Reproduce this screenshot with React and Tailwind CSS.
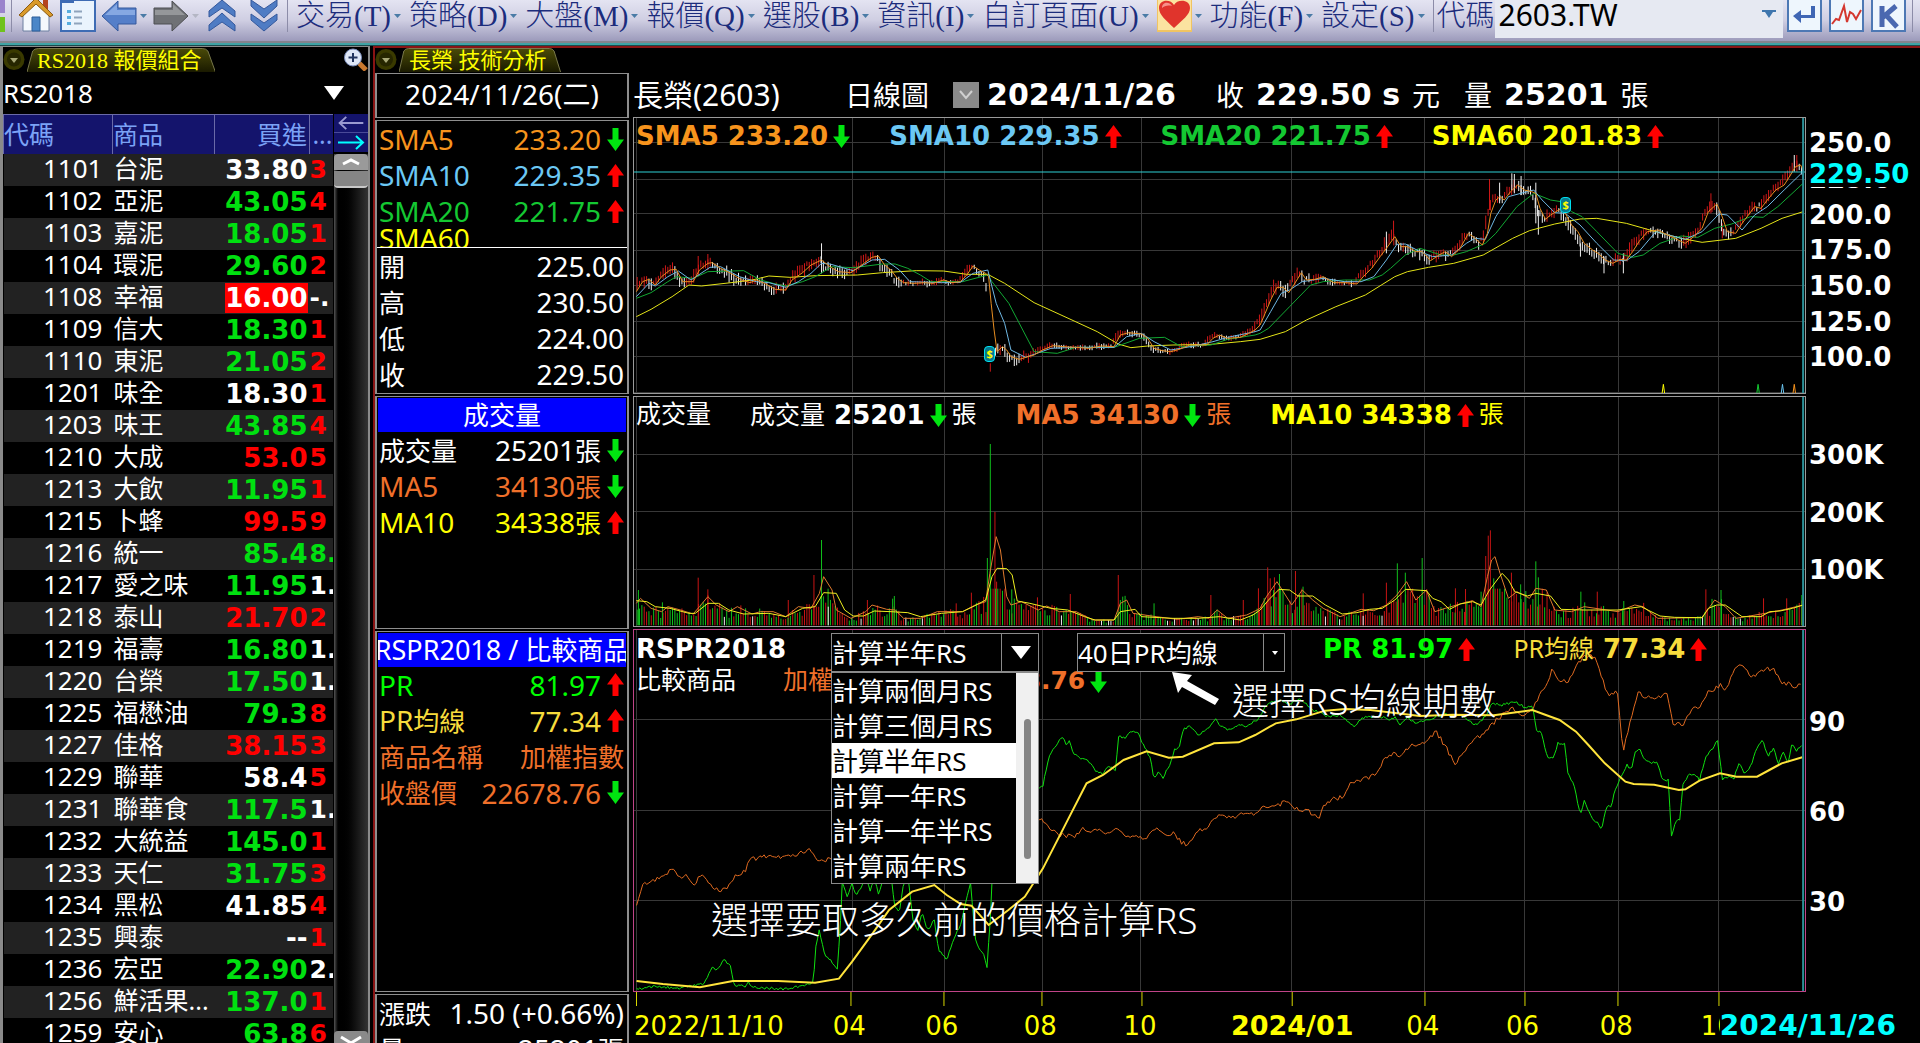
import { useState } from 'react'
import { clsx } from 'clsx'

const UI = "font-['Noto_Sans','Noto_Sans_CJK_TC',sans-serif]"
const BOLD = "font-['DejaVu_Sans','Noto_Sans_CJK_TC',sans-serif] font-bold"
const PLAIN = "font-['DejaVu_Sans','Noto_Sans_CJK_TC',sans-serif]"
const SERIF = "font-['Liberation_Serif','Noto_Sans_CJK_TC',serif]"

const MENUS = ['交易(T)', '策略(D)', '大盤(M)', '報價(Q)', '選股(B)', '資訊(I)', '自訂頁面(U)']
const MENUS_AFTER = ['功能(F)', '設定(S)']

const G = 'text-[#00e010]'
const R = 'text-[#ff0000]'
const W = 'text-white'

const QUOTES = [
  ['1101', '台泥', '33.80', W, '3', R],
  ['1102', '亞泥', '43.05', G, '4', R],
  ['1103', '嘉泥', '18.05', G, '1', R],
  ['1104', '環泥', '29.60', G, '2', R],
  ['1108', '幸福', '16.00', W, '-.', W],
  ['1109', '信大', '18.30', G, '1', R],
  ['1110', '東泥', '21.05', G, '2', R],
  ['1201', '味全', '18.30', W, '1', R],
  ['1203', '味王', '43.85', G, '4', R],
  ['1210', '大成', '53.0', R, '5', R],
  ['1213', '大飲', '11.95', G, '1', R],
  ['1215', '卜蜂', '99.5', R, '9', R],
  ['1216', '統一', '85.4', G, '8.', G],
  ['1217', '愛之味', '11.95', G, '1.', W],
  ['1218', '泰山', '21.70', R, '2', R],
  ['1219', '福壽', '16.80', G, '1.', W],
  ['1220', '台榮', '17.50', G, '1.', W],
  ['1225', '福懋油', '79.3', G, '8', R],
  ['1227', '佳格', '38.15', R, '3', R],
  ['1229', '聯華', '58.4', W, '5', R],
  ['1231', '聯華食', '117.5', G, '1.', W],
  ['1232', '大統益', '145.0', G, '1', R],
  ['1233', '天仁', '31.75', G, '3', R],
  ['1234', '黑松', '41.85', W, '4', R],
  ['1235', '興泰', '--', W, '1', R],
  ['1236', '宏亞', '22.90', G, '2.', W],
  ['1256', '鮮活果...', '137.0', G, '1', R],
  ['1259', '安心', '63.8', G, '6', R],
]

const PERIODS = ['計算兩個月RS', '計算三個月RS', '計算半年RS', '計算一年RS', '計算一年半RS', '計算兩年RS']

// Chart series. Price and volume lines come in two halves, the second one starts at HALF.
const HALF = 1497

function parse(text, dx = 0) {
  return text.trim().split(/\s+/).map((p) => {
    const [x, y] = p.split(',').map(Number)
    return [x + dx, y]
  })
}

function series(a, b) {
  const left = parse(a).filter(([x]) => x < HALF)
  return [...left, ...parse(b, HALF)]
}

function rng(seed) {
  let s = seed
  return () => {
    s = (s * 1664525 + 1013904223) % 4294967296
    return s / 4294967296
  }
}

function valueAt(points, x) {
  for (let i = 1; i < points.length; i++) {
    if (x <= points[i][0]) {
      const [x0, y0] = points[i - 1]
      const [x1, y1] = points[i]
      return y0 + ((y1 - y0) * (x - x0)) / (x1 - x0 || 1)
    }
  }
  return points[points.length - 1][1]
}

const toPoints = (points) => points.map((p) => p.join(',')).join(' ')

function rough(points, step, amp, seed) {
  const rand = rng(seed)
  const out = []
  const end = points[points.length - 1][0]
  for (let x = points[0][0]; x <= end; x += step) {
    out.push([x.toFixed(1), (valueAt(points, x) + (rand() - 0.5) * amp).toFixed(1)])
  }
  return out
}

const SMA5 = series(
  '15,575 30,545 45,538 60,555 75,530 95,510 110,508 125,545 150,545 165,510 185,490 195,488 215,505 240,520 265,540 285,548 300,540 320,550 345,568 370,570 385,540 410,518 430,495 455,480 475,500 495,515 525,518 545,500 575,472 590,468 605,495 620,510 635,535 650,548 675,550 700,548 720,550 745,540 765,548 785,545 800,525 815,498 830,510 845,520 852,530 858,610 865,690 872,755 885,740 895,750 905,770 925,778 945,770 960,765 980,750 1005,737 1030,740 1060,742 1090,745 1120,738 1150,740 1165,705 1185,698 1215,702 1230,715 1245,745 1265,752 1285,755 1305,748 1330,735 1370,735 1385,715 1400,705 1420,715 1450,712 1470,700 1485,690',
  '0,675 12,640 25,600 40,562 55,562 68,578 80,555 98,518 110,540 130,538 150,530 175,548 205,548 230,552 245,530 265,505 285,470 300,445 320,410 335,440 350,440 370,455 385,455 405,482 425,465 440,455 455,470 475,445 495,400 508,412 528,435 540,400 548,340 560,300 570,290 580,300 595,275 612,255 628,270 645,275 655,280 665,325 678,358 690,345 712,328 725,340 740,375 755,395 770,430 790,450 805,462 820,480 838,490 855,478 870,480 885,455 900,425 920,395 945,390 960,400 985,415 1010,430 1030,410 1050,385 1065,335 1085,312 1095,340 1110,395 1130,400 1145,370 1160,345 1175,320 1190,325 1205,300 1225,270 1245,255 1260,225 1272,200 1284,195 1290,210',
)
const SMA10 = series(
  '15,590 45,550 60,558 90,530 115,513 145,540 190,502 215,500 260,530 300,545 330,548 370,562 400,545 430,520 455,490 475,492 530,512 575,480 605,478 640,510 665,545 740,548 785,547 815,520 850,510 870,610 890,670 905,750 940,772 1000,745 1060,742 1150,742 1180,710 1215,700 1245,725 1285,750 1340,738 1385,725 1420,712 1485,695',
  '0,690 25,635 50,580 70,570 100,545 150,535 200,545 240,545 270,530 300,480 325,433 345,432 380,455 410,470 455,465 490,430 510,415 535,418 560,350 590,290 625,278 650,270 670,300 700,338 725,340 760,375 800,430 840,480 870,482 900,455 940,395 980,408 1010,418 1050,395 1090,342 1110,345 1145,390 1175,345 1205,320 1245,270 1290,215',
)
const SMA20 = series(
  '15,595 50,578 90,545 110,530 150,535 185,515 270,512 310,540 340,550 370,558 410,545 440,530 480,500 530,503 600,492 630,492 660,505 690,525 715,545 790,545 850,525 860,545 900,610 960,755 1015,760 1060,742 1150,742 1210,715 1270,712 1310,740 1380,735 1420,718 1485,705',
  '0,700 20,685 70,620 120,555 150,545 200,540 260,540 290,525 310,505 345,465 380,445 430,465 460,465 490,455 535,430 560,400 610,320 650,280 690,300 715,305 740,335 765,350 800,395 850,460 885,472 910,465 950,430 1000,408 1040,412 1080,385 1120,372 1165,350 1195,352 1230,320 1290,250',
)
const SMA60 = series(
  '15,650 50,628 100,590 140,555 170,558 240,548 290,540 330,528 380,532 440,527 540,525 600,518 680,512 745,513 800,523 850,523 890,550 960,608 1050,660 1110,695 1160,732 1190,743 1230,738 1290,735 1380,733 1450,725',
  '0,718 60,695 110,660 180,620 250,585 320,530 350,515 400,502 460,490 530,465 600,415 640,392 700,372 760,357 800,355 870,370 940,395 1000,415 1050,427 1130,415 1190,385 1240,355 1290,335',
)
const VOL5 = series(
  '15,640 25,625 50,655 75,665 90,650 120,660 150,672 165,650 185,620 205,645 235,665 255,650 290,672 310,665 340,665 370,680 400,650 430,655 450,610 460,560 480,600 490,660 525,685 560,665 575,645 610,658 630,660 650,685 690,685 730,665 790,665 820,645 845,635 855,550 870,440 880,480 895,620 905,645 930,635 970,660 990,648 1020,665 1060,665 1100,690 1150,690 1165,640 1180,630 1195,670 1250,680 1300,688 1350,680 1375,685 1395,660 1420,685 1465,675 1490,660',
  '0,655 15,620 40,575 55,605 75,645 100,600 125,630 150,655 190,680 240,658 270,662 300,645 325,615 348,575 370,630 395,600 415,665 440,655 480,640 505,632 525,650 540,560 550,510 558,500 570,550 590,625 610,605 640,625 655,595 680,600 700,660 740,665 770,650 850,665 890,645 910,650 945,685 1050,683 1080,630 1105,650 1130,685 1200,670 1240,660 1290,645',
)
const VOL10 = series(
  '15,632 40,635 60,650 95,655 140,670 155,670 185,640 210,640 235,660 270,672 330,670 370,680 410,655 440,650 460,608 490,610 510,660 530,678 555,678 580,663 620,665 660,668 690,680 740,670 790,665 815,650 845,630 860,560 872,535 895,536 908,555 920,633 950,640 1000,655 1040,660 1080,680 1105,690 1150,690 1165,665 1200,658 1215,680 1290,685 1350,685 1400,680 1450,690 1480,675',
  '0,660 20,630 45,598 70,600 90,618 125,618 155,645 195,672 230,668 260,658 290,655 320,630 345,598 395,602 410,625 430,635 450,658 475,642 505,635 525,645 545,600 575,550 590,570 605,605 635,618 655,610 690,618 715,658 770,660 850,660 905,650 950,678 985,682 1050,683 1065,655 1085,645 1105,645 1145,680 1190,680 1210,665 1235,663 1265,655 1290,645',
)

// x, top, colour of the sessions that stand out
const SPIKES = [
  [20, 600, 'g'], [77, 637, 'g'], [162, 563, 'r'], [185, 598, 'r'], [376, 630, 'r'], [437, 555, 'r'],
  [455, 450, 'g'], [471, 650, 'w'], [564, 630, 'r'], [624, 626, 'g'], [628, 618, 'g'], [775, 640, 'r'],
  [811, 608, 'r'], [849, 504, 'g'], [856, 162, 'g'], [867, 366, 'r'], [871, 575, 'r'], [907, 598, 'g'],
  [968, 622, 'r'], [1046, 612, 'r'], [1160, 555, 'r'], [1165, 630, 'g'], [1245, 640, 'g'],
  [1380, 615, 'r'], [1457, 630, 'r'], [1493, 595, 'r'], [1515, 532, 'r'], [1521, 565, 'r'],
  [1531, 562, 'r'], [1543, 552, 'g'], [1581, 543, 'r'], [1599, 590, 'g'], [1742, 610, 'r'],
  [1797, 578, 'r'], [1823, 520, 'g'], [1842, 548, 'g'], [1882, 504, 'g'], [1961, 595, 'r'],
  [1985, 597, 'r'], [2022, 605, 'g'], [2033, 498, 'r'], [2039, 437, 'r'], [2044, 421, 'r'],
  [2052, 565, 'g'], [2094, 548, 'r'], [2116, 583, 'g'], [2152, 514, 'g'], [2158, 562, 'g'],
  [2259, 605, 'g'], [2298, 605, 'r'], [2361, 633, 'g'], [2556, 598, 'r'], [2592, 600, 'g'],
  [2693, 625, 'r'], [2748, 625, 'r'], [2784, 615, 'g'],
]

// x, high, low, colour
const LONG_CANDLES = [
  [455, 430, 520, 'w'], [162, 468, 520, 'r'], [185, 462, 510, 'r'], [2042, 237, 330, 'r'],
  [2066, 248, 310, 'w'], [2095, 220, 270, 'w'], [2101, 222, 280, 'w'], [2117, 228, 285, 'w'],
  [2152, 248, 370, 'w'], [2158, 330, 404, 'w'], [1814, 362, 420, 'r'], [1797, 395, 460, 'w'],
  [2258, 430, 470, 'w'], [2314, 470, 520, 'w'], [2360, 460, 520, 'w'], [2568, 280, 340, 'r'],
  [2595, 370, 415, 'r'], [2766, 165, 215, 'w'], [2772, 165, 200, 'r'], [2787, 180, 240, 'w'],
  [856, 790, 815, 'r'],
]

const BAR = 5.6

function buildCandles() {
  const rand = rng(7)
  const d = { r: '', w: '' }
  for (let x = 17; x < 2786; x += BAR) {
    if (x > 850 && x < 864) continue
    const here = valueAt(SMA5, Math.min(x + 8, 2787))
    const prev = valueAt(SMA5, x - 4)
    const slope = Math.abs(here - prev)
    const calm = x > 640 && x < 790 ? 12 : x > 960 && x < 1480 ? 10 : x > 1640 && x < 1730 ? 14 : 26
    const mid = here + (rand() - 0.5) * calm * 0.6
    const len = 8 + rand() * calm + Math.min(slope, 20) * 0.4
    const up = here < prev + (rand() - 0.5) * 10
    d[up ? 'r' : 'w'] += `M${x.toFixed(1)} ${(mid - len / 2).toFixed(1)}v${len.toFixed(1)}`
  }
  LONG_CANDLES.forEach(([x, high, low, c]) => {
    d[c] += `M${x} ${high}V${low}`
  })
  return d
}

function buildVolume() {
  const rand = rng(21)
  const d = { r: '', g: '', w: '' }
  for (let x = 17; x < 2786; x += BAR) {
    const base = 706 - valueAt(VOL5, x)
    const height = Math.min(base * (0.5 + rand() * 0.75), 110)
    const k = rand()
    const c = height < 30 && k > 0.8 ? 'w' : k < 0.45 ? 'g' : 'r'
    d[c] += `M${x.toFixed(1)} 706v${(-height).toFixed(1)}`
  }
  SPIKES.forEach(([x, top, c]) => {
    d[c] += `M${x} 706V${top}`
  })
  return d
}

const CANDLES = buildCandles()
const VOLUME = buildVolume()

const PR = parse(
  '8,1107 30,1100 60,1104 90,1090 100,1045 107,1050 114,1020 122,1038 127,1098 140,1098 143,1085 148,1102 190,1107 215,1095 223,1088 226,980 230,930 237,1010 242,1015 252,1050 256,900 258,790 264,830 270,790 275,830 281,800 286,770 292,810 297,780 302,820 306,790 312,770 318,780 322,860 327,880 332,800 338,770 344,900 350,930 355,880 362,930 370,900 375,990 385,1018 392,970 402,910 408,850 414,790 420,960 425,990 430,1005 434,1040 438,900 440,790 445,700 470,600 490,520 502,495 510,405 518,380 525,350 531,375 534,362 540,405 550,415 558,425 565,450 574,460 580,445 585,440 590,450 594,350 602,352 610,335 617,335 624,375 632,410 637,475 642,455 648,472 655,440 662,390 668,375 673,325 683,320 690,345 702,325 712,300 718,318 728,330 740,315 750,318 765,295 775,250 790,240 800,255 815,235 830,270 850,290 862,285 870,300 880,320 890,295 900,290 912,290 925,300 930,290 937,315 945,290 955,310 965,300 975,295 990,280 1000,290 1010,285 1028,315 1040,290 1048,250 1060,255 1075,245 1088,262 1097,255 1102,330 1108,340 1115,415 1122,415 1128,370 1136,370 1140,460 1148,500 1155,585 1160,545 1168,590 1175,605 1181,632 1187,555 1193,560 1197,510 1205,470 1212,435 1217,450 1222,395 1228,385 1233,420 1240,430 1248,425 1255,480 1262,480 1266,645 1272,600 1277,600 1279,500 1286,465 1295,465 1300,480 1308,410 1315,390 1322,360 1328,480 1335,470 1342,475 1348,430 1355,460 1362,440 1370,385 1377,360 1383,410 1390,385 1396,430 1402,395 1408,430 1412,375 1418,390 1425,375',
)
const PR_AVG = parse(
  '8,1083 40,1092 85,1102 125,1083 180,1083 225,1088 254,1076 270,1025 295,940 315,870 343,815 370,795 385,825 402,852 415,857 436,915 460,870 480,830 502,745 530,610 555,490 575,465 600,420 628,394 655,413 672,410 710,370 740,367 760,345 785,310 810,298 845,272 870,267 900,270 960,288 1000,284 1050,286 1097,270 1110,282 1130,300 1150,335 1165,375 1185,430 1210,485 1220,492 1245,494 1275,510 1283,508 1300,482 1325,460 1345,470 1370,470 1385,450 1400,430 1425,412',
)
const INDEX = parse(
  '8,860 15,790 28,785 40,765 52,748 62,778 68,765 78,790 87,765 97,795 108,815 122,795 127,770 140,755 145,715 155,715 165,708 180,712 195,708 218,690 228,715 235,730 243,715 300,680 380,640 460,600 500,595 510,625 522,645 540,650 550,625 560,635 570,628 580,640 592,620 602,655 614,650 627,660 640,620 650,640 660,640 670,665 678,678 690,630 702,625 712,590 720,585 732,595 742,578 755,585 770,562 785,560 797,542 805,565 815,568 825,572 837,598 845,550 858,535 868,530 877,485 890,480 905,465 915,425 928,400 938,405 950,375 965,370 980,335 990,375 1003,430 1013,400 1020,375 1030,355 1045,320 1060,285 1073,262 1086,290 1097,265 1110,210 1121,150 1128,185 1140,185 1150,140 1158,110 1172,110 1180,165 1190,230 1200,210 1207,400 1215,310 1225,215 1235,230 1245,230 1252,232 1260,215 1268,310 1280,315 1290,270 1300,265 1310,220 1325,195 1332,208 1342,155 1350,135 1360,160 1367,175 1372,150 1390,145 1400,190 1410,190 1417,205 1425,185',
)

const GRID_X = [15, 528, 748, 980, 1215, 1571, 1887, 2125, 2349, 2587]
const GRID_X_PR = [8, 270, 382, 502, 621, 804, 966, 1087, 1202, 1323]

// share of the chart width
const DATES = [
  { at: 18.6, label: '04' },
  { at: 26.5, label: '06' },
  { at: 34.9, label: '08' },
  { at: 43.4, label: '10' },
  { at: 56.2, label: '2024/01', bold: true },
  { at: 67.5, label: '04' },
  { at: 76.0, label: '06' },
  { at: 84.0, label: '08' },
  { at: 92.6, label: '10' },
]

function Arrow({ up }) {
  return (
    <svg viewBox="0 0 17 23" className="h-[23px] w-[17px] shrink-0" fill={up ? '#ff0000' : '#00e510'}>
      {up ? (
        <path d="M8.500 0L17 11.500H11.500V23H5.500V11.500H0Z" />
      ) : (
        <path d="M8.500 23L17 11.500H11.500V0H5.500V11.500H0Z" />
      )}
    </svg>
  )
}

function Line({ points, color, width = 1 }) {
  return (
    <polyline
      points={toPoints(points)}
      fill="none"
      stroke={color}
      strokeWidth={width}
      vectorEffect="non-scaling-stroke"
    />
  )
}

function Bars({ d, color }) {
  return <path d={d} stroke={color} strokeWidth="1" vectorEffect="non-scaling-stroke" fill="none" />
}

function Grid({ xs, ys, right, bottom }) {
  const d = xs.map((x) => `M${x} 0V${bottom}`).join('') + ys.map((y) => `M0 ${y}H${right}`).join('')
  return (
    <path
      d={d}
      stroke="#383838"
      strokeWidth="1"
      vectorEffect="non-scaling-stroke"
      shapeRendering="crispEdges"
      fill="none"
    />
  )
}

function Caret({ pale }) {
  return (
    <svg viewBox="0 0 7 4" className="h-1 w-[7px] shrink-0" fill={pale ? '#b4b6c4' : '#4a7ba6'}>
      <path d="M0 0H7L3.500 4Z" />
    </svg>
  )
}

function MenuButton({ children }) {
  return (
    <button type="button" className="flex items-center gap-[3px] whitespace-nowrap pr-2">
      <span>{children}</span>
      <Caret />
    </button>
  )
}

function ToolbarIcons() {
  return (
    <div className="flex h-8 shrink-0 items-start">
      <svg viewBox="0 0 12 32" className="h-8 w-3">
        <path d="M0 0H5V13H0Z" fill="#9a83cc" />
        <path d="M0 17H5V32H0Z" fill="#6fc21c" />
        <path d="M11.500 0V32" stroke="#8c8ca8" />
      </svg>
      <button type="button" aria-label="首頁" className="ml-[6px]">
        <svg viewBox="0 0 36 32" className="h-8 w-9">
          <path d="M25 0H30V9H25Z" fill="#b5431f" />
          <path d="M5 14L18 2L31 14V31H5Z" fill="#f4f8fd" stroke="#6d7fa0" />
          <path d="M1 15L18 -2L35 15L32 17L18 4L4 17Z" fill="#d99a2b" stroke="#8a5a12" />
          <path d="M14 17H22V31H14Z" fill="#4a86c8" stroke="#2b5c98" />
        </svg>
      </button>
      <button type="button" aria-label="清單" className="ml-[6px]">
        <svg viewBox="0 0 36 32" className="h-8 w-9">
          <path d="M1 0H35V31H1Z" fill="#eaf4fd" stroke="#3e6cb4" strokeWidth="2" />
          <path d="M1 0H14V3H1Z" fill="#3e6cb4" />
          <path d="M7 10H11V13H7ZM7 16H11V19H7ZM7 22H11V25H7Z" fill="#59aede" />
          <path d="M14 11.500H22M14 17.500H22M14 23.500H22" stroke="#8fa4bc" strokeWidth="2" />
        </svg>
      </button>
      <button type="button" aria-label="上一頁" className="ml-[5px] flex items-center gap-[3px]">
        <svg viewBox="0 0 36 32" className="h-8 w-9">
          <path d="M1 16L17 1V8H35V24H17V31Z" fill="#557fc9" stroke="#34589c" />
          <path d="M4 15L16 4V10H34V15Z" fill="#86a8e2" />
        </svg>
        <Caret />
      </button>
      <button type="button" aria-label="下一頁" className="ml-[6px] flex items-center gap-[3px]">
        <svg viewBox="0 0 36 32" className="h-8 w-9">
          <path d="M35 16L19 1V8H1V24H19V31Z" fill="#6f7175" stroke="#4d4f52" />
          <path d="M32 15L20 4V10H2V15Z" fill="#95979a" />
        </svg>
        <Caret pale />
      </button>
      <button type="button" aria-label="向上" className="ml-[9px]">
        <svg viewBox="0 0 28 32" className="h-8 w-7" fill="#4f7cc4" stroke="#34589c">
          <path d="M14 0L27 11V17L14 8L1 17V11Z" />
          <path d="M14 13L27 25V31L14 22L1 31V25Z" />
        </svg>
      </button>
      <button type="button" aria-label="向下" className="ml-[14px]">
        <svg viewBox="0 0 28 32" className="h-8 w-7" fill="#4f7cc4" stroke="#34589c">
          <path d="M14 18L27 6V0L14 9L1 0V6Z" />
          <path d="M14 31L27 20V14L14 23L1 14V20Z" />
        </svg>
      </button>
      <div className="ml-[9px] h-8 w-px bg-[#8c8ca8]" />
    </div>
  )
}

function Toolbar() {
  const [code, setCode] = useState('2603.TW')

  return (
    <header className="shrink-0">
      <div className="flex h-[41px] items-start overflow-hidden bg-linear-to-b from-[#e4e4f2] via-[#cfcee2] to-[#9c9abb]">
        <ToolbarIcons />
        <nav
          className={clsx(SERIF, 'flex h-8 shrink-0 items-center pl-2 text-[29px] leading-8 font-light text-[#1c2c7c]')}
        >
          {MENUS.map((m) => (
            <MenuButton key={m}>{m}</MenuButton>
          ))}
          <button type="button" aria-label="我的最愛" className="mr-2 flex items-center gap-[3px]">
            <svg viewBox="0 0 35 32" className="h-8 w-[35px]">
              <path d="M0 0H35V32H0Z" fill="#f0c462" />
              <path d="M1 0H34V30H1Z" fill="#fbe3a0" />
              <path d="M17 28C9 20 2 15 2 8C2 -1 14 -1 17 5C20 -1 33 -1 33 8C33 15 25 20 17 28Z" fill="#e0342c" />
              <path d="M5 8C5 2 12 1 15 6C11 5 7 6 5 8Z" fill="#f6928a" />
            </svg>
            <Caret />
          </button>
          {MENUS_AFTER.map((m) => (
            <MenuButton key={m}>{m}</MenuButton>
          ))}
          <label htmlFor="code" className="border-l border-[#8c8ca8] pl-[3px]">
            代碼
          </label>
        </nav>
        <div className="flex h-[38px] min-w-0 flex-1 items-start bg-[#e6e9f2]">
          <input
            id="code"
            value={code}
            onChange={(e) => setCode(e.target.value)}
            className={clsx(UI, 'h-8 min-w-0 flex-1 bg-transparent pb-1 pl-1 text-[30px] text-black outline-none')}
          />
          <button type="button" aria-label="代碼清單" className="mt-[10px] mr-[7px]">
            <svg viewBox="0 0 14 8" className="h-2 w-[14px]" fill="#3f76ae">
              <path d="M0 0H14V2H11L7 8L3 2H0Z" />
            </svg>
          </button>
        </div>
        <div className="flex shrink-0 gap-[7px] pl-1">
          <button type="button" aria-label="確認">
            <svg viewBox="0 0 35 32" className="h-8 w-[35px]">
              <path d="M1 -2H34V31H1Z" fill="#eef6fd" stroke="#4d78b4" strokeWidth="2" />
              <path d="M28 6V18H14V23L6 16L14 10V15H24V6Z" fill="#3f66b4" />
            </svg>
          </button>
          <button type="button" aria-label="走勢圖">
            <svg viewBox="0 0 35 32" className="h-8 w-[35px]">
              <path d="M1 -2H34V31H1Z" fill="#eef6fd" stroke="#4d78b4" strokeWidth="2" />
              <path d="M3 24L7 19L10 20L15 6L18 22L21 12L24 14L27 19L32 10" fill="none" stroke="#d4372f" strokeWidth="2" />
            </svg>
          </button>
          <button type="button" aria-label="K線圖">
            <svg viewBox="0 0 35 32" className="h-8 w-[35px]">
              <path d="M1 -2H34V31H1Z" fill="#eef6fd" stroke="#4d78b4" strokeWidth="2" />
              <path d="M11 6V27M25 6L11 18M15 15L26 27" fill="none" stroke="#4a68b0" strokeWidth="5" />
            </svg>
          </button>
        </div>
        <div className="ml-[6px] h-8 w-[8px] border-l border-[#8c8ca8]" />
      </div>
      <div className="h-[2px] bg-[#84848e]" />
      <div className="h-[2px] bg-[#3fa3a5]" />
      <div className="h-px bg-[#1c4a4c]" />
    </header>
  )
}

function Tab({ children }) {
  return (
    <div className="flex items-start gap-[2px]">
      <button type="button" aria-label="選單">
        <svg viewBox="0 0 22 23" className="h-[23px] w-[22px]">
          <circle cx="11" cy="11.500" r="10.500" fill="#3a3a00" />
          <circle cx="11" cy="11.500" r="7" fill="#262600" />
          <path d="M7 10H15L11 15Z" fill="#a8a878" />
        </svg>
      </button>
      <div className={clsx(SERIF, 'relative h-6 pr-[14px] pl-[10px] text-[22px] leading-[26px] text-[#ffff00]')}>
        <svg viewBox="0 0 100 24" preserveAspectRatio="none" className="absolute inset-0 h-full w-full">
          <defs>
            <linearGradient id="tab" x1="0" y1="0" x2="0" y2="1">
              <stop offset="0" stopColor="#4a4a08" />
              <stop offset="1" stopColor="#1a1a00" />
            </linearGradient>
          </defs>
          <path
            d="M0 24L3 3Q4 0.500 6 0.500H93Q95 0.500 96 3L100 24"
            fill="url(#tab)"
            stroke="#77774a"
            vectorEffect="non-scaling-stroke"
          />
        </svg>
        <span className="relative whitespace-nowrap">{children}</span>
      </div>
    </div>
  )
}

function QuotePanel() {
  return (
    <section className="flex w-[370px] shrink-0 flex-col overflow-hidden border-t border-r-2 border-l-[3px] border-[#8a8a8a] bg-black">
      <div className="flex h-[25px] shrink-0 items-start justify-between pt-px">
        <Tab>RS2018 報價組合</Tab>
        <button type="button" aria-label="放大">
          <svg viewBox="0 0 25 23" className="h-[23px] w-[25px]">
            <path d="M15 14L23 22" stroke="#c9782e" strokeWidth="5" />
            <circle cx="10" cy="9.500" r="8.500" fill="#dfe7f7" stroke="#7c8fbe" />
            <path d="M10 5V14M5.500 9.500H14.500" stroke="#22345e" strokeWidth="2" />
          </svg>
        </button>
      </div>
      <div className="relative flex h-[42px] shrink-0 items-center">
        <select
          aria-label="報價組合"
          className={clsx(UI, 'h-full w-full appearance-none bg-black text-[26px] text-white outline-none')}
        >
          <option>RS2018</option>
        </select>
        <svg viewBox="0 0 20 14" className="pointer-events-none absolute right-6 h-[14px] w-5" fill="#fff">
          <path d="M0 0H20L10 14Z" />
        </svg>
      </div>
      <div className="flex min-h-0 flex-1 justify-between">
        <div className="min-w-0 overflow-hidden">
          <table className={clsx(UI, 'w-[329px] table-fixed border-collapse text-white')}>
            <colgroup>
              <col className="w-[109px]" />
              <col className="w-[102px]" />
              <col className="w-[95px]" />
              <col className="w-[23px]" />
            </colgroup>
            <thead>
              <tr className="h-[39px] bg-[#14146c] text-[25px] leading-8 text-[#7ba2f6]">
                <th className="border-t border-l border-[#6a6aa8] p-0 text-left font-normal">代碼</th>
                <th className="border-t border-l border-[#6a6aa8] p-0 text-left font-normal">商品</th>
                <th className="border-t border-l border-[#6a6aa8] p-0 pr-[2px] text-right font-normal">買進</th>
                <th className="border-t border-l border-[#6a6aa8] p-0 text-right font-normal">...</th>
              </tr>
            </thead>
            <tbody>
              {QUOTES.map(([id, name, bid, bidColor, ask, askColor]) => (
                <tr key={id} className="h-8 leading-[30px] whitespace-nowrap odd:bg-[#222222]">
                  <td className="p-0 pr-[10px] text-right align-top text-[26px] leading-7">{id}</td>
                  <td className="p-0 pl-px align-top text-[25px] leading-7">{name}</td>
                  <td className={clsx(BOLD, 'p-0 pr-[2px] text-right text-[26px]', bidColor)}>
                    <span className={clsx('inline-block', id === '1108' && 'bg-[#ff0000]')}>{bid}</span>
                  </td>
                  <td className={clsx(BOLD, 'overflow-hidden p-0 text-[25px]', askColor)}>{ask}</td>
                </tr>
              ))}
            </tbody>
          </table>
        </div>
        <div className="flex w-[34px] shrink-0 flex-col">
          <div className="flex h-[38px] shrink-0 flex-col bg-[#14146c]">
            <button type="button" aria-label="往左" className="h-[19px] border-b border-[#4a4a98]">
              <svg viewBox="0 0 34 19" className="h-[18px] w-full" fill="none" stroke="#9a9ad0" strokeWidth="2">
                <path d="M30 9.500H5M12 3L5 9.500L12 16" />
              </svg>
            </button>
            <button type="button" aria-label="往右" className="h-[19px]">
              <svg viewBox="0 0 34 19" className="h-[19px] w-full" fill="none" stroke="#00ffff" strokeWidth="2">
                <path d="M4 9.500H29M22 3L29 9.500L22 16" />
              </svg>
            </button>
          </div>
          <div className="mt-[2px] flex min-h-0 flex-1 flex-col justify-between bg-linear-to-r from-[#555] via-black via-15% to-[#333]">
            <div>
              <button type="button" aria-label="向上捲動" className="block h-4 w-full rounded-t bg-[#9a9a9a]">
                <svg viewBox="0 0 34 16" className="h-4 w-full" fill="none" stroke="#fff" strokeWidth="3">
                  <path d="M9 10L17 6L25 10" />
                </svg>
              </button>
              <div className="mt-px h-[17px] rounded-b border-b-2 border-[#c8c8c8] bg-[#858585]" />
            </div>
            <button type="button" aria-label="向下捲動" className="block h-3 w-full rounded-t bg-[#8a8a8a]">
              <svg viewBox="0 0 34 12" className="h-3 w-full" fill="none" stroke="#fff" strokeWidth="3">
                <path d="M7 6L17 12L27 6" />
              </svg>
            </button>
          </div>
        </div>
      </div>
    </section>
  )
}

function Cjk({ children }) {
  return <span className="text-[26px]">{children}</span>
}

function InfoRow({ label, value, dir, color }) {
  return (
    <div className={clsx('flex h-9 shrink-0 items-center pr-[3px] pl-[2px] whitespace-nowrap', color)}>
      <span className="flex-1">{label}</span>
      <span>{value}</span>
      {dir && (
        <span className="ml-[6px]">
          <Arrow up={dir === 'up'} />
        </span>
      )}
    </div>
  )
}

function InfoTitle({ children }) {
  return (
    <div className="mx-px mt-px flex h-[34px] shrink-0 items-center justify-center overflow-hidden bg-[#0000ff] text-[27px] whitespace-nowrap">
      <span className="shrink-0">{children}</span>
    </div>
  )
}

const BOX = 'flex flex-col min-h-0 overflow-hidden border-x-2 border-y border-[#8e8e8e]'

function InfoColumn() {
  return (
    <aside className={clsx(UI, 'flex w-[254px] shrink-0 flex-col gap-[2px] text-[28px] leading-9 text-white')}>
      <div>
        <div className="h-[25px]">
          <Tab>長榮 技術分析</Tab>
        </div>
        <div className="flex h-[45px] items-center justify-center border-x-2 border-y border-[#8e8e8e] pb-1">
          2024/11/26(二)
        </div>
      </div>
      <div className={clsx(BOX, 'flex-[274]')}>
        <InfoRow label="SMA5" value="233.20" dir="down" color="text-[#f7941d]" />
        <InfoRow label="SMA10" value="229.35" dir="up" color="text-[#6cc8f4]" />
        <InfoRow label="SMA20" value="221.75" dir="up" color="text-[#14c832]" />
        <div className="h-[19px] shrink-0 overflow-hidden border-b border-white px-[2px] leading-[18px] text-[#ffff00]">
          SMA60
        </div>
        <InfoRow label={<Cjk>開</Cjk>} value="225.00" />
        <InfoRow label={<Cjk>高</Cjk>} value="230.50" />
        <InfoRow label={<Cjk>低</Cjk>} value="224.00" />
        <InfoRow label={<Cjk>收</Cjk>} value="229.50" />
      </div>
      <div className={clsx(BOX, 'flex-[232]')}>
        <InfoTitle>
          <Cjk>成交量</Cjk>
        </InfoTitle>
        <InfoRow label={<Cjk>成交量</Cjk>} value={<>25201<Cjk>張</Cjk></>} dir="down" />
        <InfoRow label="MA5" value={<>34130<Cjk>張</Cjk></>} dir="down" color="text-[#f0702a]" />
        <InfoRow label="MA10" value={<>34338<Cjk>張</Cjk></>} dir="up" color="text-[#ffff00]" />
      </div>
      <div className={clsx(BOX, 'flex-[362]')}>
        <InfoTitle>
          RSPR2018 / <Cjk>比較商品</Cjk>
        </InfoTitle>
        <InfoRow label="PR" value="81.97" dir="up" color="text-[#00ff00]" />
        <InfoRow label={<>PR<Cjk>均線</Cjk></>} value="77.34" dir="up" color="text-[#f7dc3c]" />
        <InfoRow label={<Cjk>商品名稱</Cjk>} value={<Cjk>加權指數</Cjk>} color="text-[#f0702a]" />
        <InfoRow label={<Cjk>收盤價</Cjk>} value="22678.76" dir="down" color="text-[#f0702a]" />
      </div>
      <div className="h-[49px] shrink-0 overflow-hidden border-x-2 border-t border-[#8e8e8e]">
        <InfoRow label={<Cjk>漲跌</Cjk>} value="1.50 (+0.66%)" />
        <InfoRow label={<Cjk>量</Cjk>} value={<>25201<Cjk>張</Cjk></>} />
      </div>
    </aside>
  )
}

function AxisLabel({ top, className, children }) {
  return (
    <span
      className={clsx(BOLD, 'absolute left-0 -translate-y-1/2 bg-black pl-[3px] text-[26px] leading-[26px]', className)}
      style={{ top: `${top}%` }}
    >
      {children}
    </span>
  )
}

function Legend({ children, dir, unit, color }) {
  return (
    <span className={clsx('flex items-center gap-[5px] whitespace-nowrap', color)}>
      {children}
      <Arrow up={dir === 'up'} />
      {unit && <span className="text-[25px] font-normal">{unit}</span>}
    </span>
  )
}

function Dividend({ left, top }) {
  return (
    <span
      className="absolute flex h-4 w-[11px] items-center justify-center rounded-sm border border-[#00e0f0] bg-[#08788c] text-[11px] leading-none font-bold text-[#ffff00]"
      style={{ left: `${left}%`, top: `${top}%` }}
    >
      $
    </span>
  )
}

function ChartHeader() {
  return (
    <div className={clsx(UI, 'flex h-[69px] shrink-0 items-center pt-6 text-[28px] leading-9 whitespace-nowrap text-white')}>
      <span className="w-[212px] text-[30px]">長榮(2603)</span>
      <span>日線圖</span>
      <button type="button" aria-label="週期" className="mr-2 ml-6 flex h-[26px] w-[26px] items-center justify-center bg-[#8a8a8a]">
        <svg viewBox="0 0 16 12" className="h-3 w-4" fill="none" stroke="#d0d0d0" strokeWidth="2">
          <path d="M2 2L8 9L14 2" />
        </svg>
      </button>
      <span className={clsx(BOLD, 'text-[30px]')}>2024/11/26</span>
      <span className="ml-10">收</span>
      <span className={clsx(BOLD, 'ml-3 text-[30px]')}>229.50 s</span>
      <span className="ml-3">元</span>
      <span className="ml-6">量</span>
      <span className={clsx(BOLD, 'ml-3 text-[30px]')}>25201</span>
      <span className="ml-3">張</span>
    </div>
  )
}

function PriceChart() {
  return (
    <div className="flex min-h-0 flex-[277]">
      <div className="relative flex-1 border border-[#9a9a9a]">
        <svg viewBox="9.5 54 2782 825" preserveAspectRatio="none" className="absolute inset-0 h-full w-full">
          <Grid xs={GRID_X} ys={[127, 237, 341, 450, 555, 663, 769, 876]} right={2792} bottom={880} />
          <Bars d={CANDLES.r} color="#d01818" />
          <Bars d={CANDLES.w} color="#f0f0f0" />
          <Line points={SMA60} color="#e4e418" />
          <Line points={SMA20} color="#12a834" />
          <Line points={SMA10} color="#6fb8e4" />
          <Line points={SMA5} color="#e88e20" />
          <Line points={[[0, 216], [2792, 216]]} color="#2fd0d4" />
          <Line points={[[2452, 880], [2455, 853], [2458, 880]]} color="#ffff00" />
          <Line points={[[2677, 880], [2680, 853], [2683, 880]]} color="#14c832" />
          <Line points={[[2735, 880], [2738, 853], [2741, 880]]} color="#6cc8f4" />
          <Line points={[[2763, 880], [2766, 853], [2769, 880]]} color="#f7941d" />
          <path d="M2787 54V880" stroke="#2a8f96" strokeWidth="2" vectorEffect="non-scaling-stroke" />
        </svg>
        <Dividend left={29.9} top={82.8} />
        <Dividend left={79.1} top={28.7} />
        <div className={clsx(BOLD, 'relative flex h-9 items-center gap-[39px] pl-[2px] text-[26px]')}>
          <Legend dir="down" color="text-[#f7941d]">SMA5 233.20</Legend>
          <Legend dir="up" color="text-[#6cc8f4]">SMA10 229.35</Legend>
          <Legend dir="up" color="text-[#14c832]">SMA20 221.75</Legend>
          <Legend dir="up" color="text-[#ffff00]">SMA60 201.83</Legend>
        </div>
      </div>
      <div className="relative w-[114px] text-white">
        {[250, 225, 200, 175, 150, 125, 100].map((v) => (
          <AxisLabel key={v} top={86.800 - (v - 100) * 0.515}>
            {v.toFixed(1)}
          </AxisLabel>
        ))}
        <AxisLabel top={20.500} className="text-[#00ffff]">
          229.50
        </AxisLabel>
      </div>
    </div>
  )
}

function VolumeChart() {
  return (
    <div className="flex min-h-0 flex-[231]">
      <div className="relative flex-1 border border-[#9a9a9a]">
        <svg viewBox="9.5 21 2782 687" preserveAspectRatio="none" className="absolute inset-0 h-full w-full">
          <Grid xs={GRID_X} ys={[192, 364, 537]} right={2792} bottom={708} />
          <Bars d={VOLUME.r} color="#c81414" />
          <Bars d={VOLUME.g} color="#10c01c" />
          <Bars d={VOLUME.w} color="#f0f0f0" />
          <Line points={VOL5} color="#e07a2e" />
          <Line points={VOL10} color="#f0f020" />
          <path d="M2787 21V708" stroke="#2a8f96" strokeWidth="2" vectorEffect="non-scaling-stroke" />
        </svg>
        <div className={clsx(BOLD, 'relative flex h-9 items-center gap-[39px] pl-[2px] text-[26px] text-white')}>
          <span className="text-[25px] font-normal">成交量</span>
          <Legend dir="down" unit="張">
            <span>
              <span className="text-[25px] font-normal">成交量</span> 25201
            </span>
          </Legend>
          <Legend dir="down" unit="張" color="text-[#f0702a]">MA5 34130</Legend>
          <Legend dir="up" unit="張" color="text-[#ffff00]">MA10 34338</Legend>
        </div>
      </div>
      <div className="relative w-[114px] text-white">
        {[300, 200, 100].map((v) => (
          <AxisLabel key={v} top={75.500 - (v - 100) * 0.249}>
            {v}K
          </AxisLabel>
        ))}
      </div>
    </div>
  )
}

function PeriodSelect() {
  const [period, setPeriod] = useState('計算半年RS')

  return (
    <div className={clsx(UI, 'relative h-[39px] w-[208px] text-[26px] font-normal text-white')}>
      <select
        aria-label="RS期間"
        value={period}
        onChange={(e) => setPeriod(e.target.value)}
        className="h-full w-full appearance-none border border-[#8a8a8a] bg-black leading-9 outline-none"
      >
        {PERIODS.map((p) => (
          <option key={p}>{p}</option>
        ))}
      </select>
      <div className="pointer-events-none absolute inset-y-0 right-0 flex w-[38px] items-center justify-center border-l border-[#8a8a8a]">
        <svg viewBox="0 0 20 13" className="h-[13px] w-5" fill="#fff">
          <path d="M0 0H20L10 13Z" />
        </svg>
      </div>
      <div className="absolute top-full left-0 z-10 flex w-full border border-[#8a8a8a] bg-black">
        <ul role="listbox" aria-label="RS期間" className="flex-1">
          {PERIODS.map((p) => (
            <li key={p} role="option" aria-selected={p === period}>
              <button
                type="button"
                onClick={() => setPeriod(p)}
                className={clsx(
                  'block h-[35px] w-full text-left leading-[34px] whitespace-nowrap',
                  p === period && 'bg-white text-black'
                )}
              >
                {p}
              </button>
            </li>
          ))}
        </ul>
        <div className="flex w-[22px] justify-center bg-[#f0f0f0] pt-[46px] pb-6">
          <div className="w-[7px] rounded-sm bg-[#858585]" />
        </div>
      </div>
    </div>
  )
}

function RsChart() {
  return (
    <div className="flex min-h-0 flex-[363]">
      <div className="relative flex-1 border border-[#c04488]">
        <svg viewBox="4.9 30 1423.4 1083" preserveAspectRatio="none" className="absolute inset-0 h-full w-full">
          <Grid xs={GRID_X_PR} ys={[299, 571, 842]} right={1429} bottom={1113} />
          <Line points={rough(INDEX, 2.5, 14, 3)} color="#e06a20" />
          <Line points={rough(PR, 2, 8, 5)} color="#10e010" />
          <Line points={PR_AVG} color="#ffe43c" width={2} />
          <path d="M1426 30V1113" stroke="#2a8f96" strokeWidth="2" vectorEffect="non-scaling-stroke" />
        </svg>
        <div className={clsx(BOLD, 'relative z-10 flex items-center gap-[38px] pl-[2px] text-[26px] text-white')}>
          <span className="w-[157px] pb-[6px]">RSPR2018</span>
          <PeriodSelect />
          <div className={clsx(UI, 'relative h-[39px] w-[208px] font-normal')}>
            <select
              aria-label="PR均線期數"
              className="h-full w-full appearance-none border border-[#8a8a8a] bg-black leading-9 outline-none"
            >
              <option>40日PR均線</option>
            </select>
            <div className="pointer-events-none absolute inset-y-0 right-0 flex w-[22px] items-center justify-center border-l border-[#8a8a8a]">
              <svg viewBox="0 0 6 4" className="h-1 w-[6px]" fill="#fff">
                <path d="M0 0H6L3 4Z" />
              </svg>
            </div>
          </div>
          <div className="flex gap-[38px] pb-[6px]">
            <Legend dir="up" color="text-[#00ff00]">PR 81.97</Legend>
            <Legend dir="up" color="text-[#f7dc3c]">
              <span>
                <span className={clsx(UI, 'text-[25px] font-normal')}>PR均線</span> 77.34
              </span>
            </Legend>
          </div>
        </div>
        <div className={clsx(BOLD, 'relative flex h-3 items-center pl-[2px] text-[25px] leading-3 text-white')}>
          <span className="w-[147px] font-normal">比較商品</span>
          <span className="w-[171px] font-normal text-[#f0702a]">加權指數</span>
          <Legend dir="down" color="text-[#f0702a]">22678.76</Legend>
        </div>
        <svg viewBox="0 0 50 34" className="absolute top-[41px] left-[536px] h-[34px] w-[50px]" fill="#fff">
          <path d="M2 1L22 4L17 10L49 28L45 34L12 16L8 22Z" />
        </svg>
        <p className={clsx(UI, 'absolute top-[46px] left-[598px] z-20 text-[37px] leading-[50px] font-light whitespace-nowrap text-white')}>
          選擇RS均線期數
        </p>
        <p className={clsx(UI, 'absolute top-[265px] left-[77px] z-20 text-[37px] leading-[50px] font-light whitespace-nowrap text-white')}>
          選擇要取多久前的價格計算RS
        </p>
      </div>
      <div className="relative w-[114px] text-white">
        {[90, 60, 30].map((v) => (
          <AxisLabel key={v} top={75.200 - (v - 30) * 0.828}>
            {v}
          </AxisLabel>
        ))}
      </div>
    </div>
  )
}

function DateAxis() {
  return (
    <div className={clsx(PLAIN, 'flex h-[51px] shrink-0 text-[26px] leading-8 text-[#ffff00]')}>
      <div className="relative flex-1">
        <div className="ml-[3px] h-[14px] w-px bg-[#d8d800]" />
        <span className="absolute top-[18px] left-px">2022/11/10</span>
        {DATES.map((d) => (
          <div
            key={d.at}
            className="absolute top-0 flex -translate-x-1/2 flex-col items-center gap-1"
            style={{ left: `${d.at}%` }}
          >
            <div className="h-[14px] w-px bg-[#d8d800]" />
            <span className={clsx(d.bold ? 'text-[27px] font-bold' : 'pr-1')}>{d.label}</span>
          </div>
        ))}
      </div>
      <div className="relative w-[114px]">
        <span className="absolute top-[18px] right-6 bg-black text-[28px] font-bold whitespace-nowrap text-[#00ffff]">
          2024/11/26
        </span>
      </div>
    </div>
  )
}

export default function App() {
  return (
    <div className="flex h-screen flex-col overflow-hidden bg-black">
      <Toolbar />
      <div className="flex min-h-0 flex-1 gap-[3px]">
        <QuotePanel />
        <main className="flex min-w-0 flex-1 gap-1 border-t-2 border-l-2 border-[#8a1414]">
          <InfoColumn />
          <div className="flex min-w-0 flex-1 flex-col">
            <ChartHeader />
            <div className="flex min-h-0 flex-1 flex-col gap-[2px]">
              <PriceChart />
              <VolumeChart />
              <RsChart />
            </div>
            <DateAxis />
          </div>
        </main>
      </div>
    </div>
  )
}
